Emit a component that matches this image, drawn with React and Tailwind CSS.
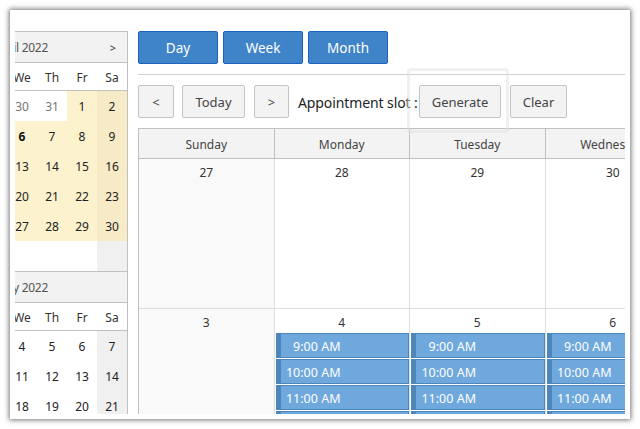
const aprilRows = [
  [['30', 'off'], ['31', 'off'], ['1', 'hi'], ['2', 'hiSat']],
  [['6', 'today'], ['7', 'hi'], ['8', 'hi'], ['9', 'hiSat']],
  [['13', 'hi'], ['14', 'hi'], ['15', 'hi'], ['16', 'hiSat']],
  [['20', 'hi'], ['21', 'hi'], ['22', 'hi'], ['23', 'hiSat']],
  [['27', 'hi'], ['28', 'hi'], ['29', 'hi'], ['30', 'hiSat']],
  [['', ''], ['', ''], ['', ''], ['', 'sat']],
];

const mayRows = [
  [['4', ''], ['5', ''], ['6', ''], ['7', 'sat']],
  [['11', ''], ['12', ''], ['13', ''], ['14', 'sat']],
  [['18', ''], ['19', ''], ['20', ''], ['21', 'sat']],
];

const cellStyles = {
  '': 'bg-white text-[#222]',
  off: 'bg-white text-[#777]',
  hi: 'bg-[#fdf2ce] text-[#222]',
  hiSat: 'bg-[#f6ebc6] text-[#222]',
  today: 'bg-[#fdf2ce] text-[#111] font-bold',
  sat: 'bg-[#f0f0f0] text-[#222]',
};

const MonthNav = ({ title, rows, next }) => (
  <div className="w-[120px]">
    <div className="h-[31px] pt-[2px] bg-[#f2f2f2] border-b border-[#c0c0c0] flex items-center justify-between text-[#555] pr-[11px]">
      <div className="w-[41px] flex justify-end whitespace-nowrap tracking-[-0.3px]">{title}</div>
      {next && <span className="text-[#333] text-[11px]">&gt;</span>}
    </div>
    <div className="h-[28px] pt-[2px] grid grid-cols-4 border-b border-[#c0c0c0] bg-white text-[#333]">
      {['We', 'Th', 'Fr', 'Sa'].map((d) => (
        <div key={d} className="flex items-center justify-center">{d}</div>
      ))}
    </div>
    {rows.map((row, i) => (
      <div key={i} className="grid grid-cols-4">
        {row.map(([n, kind], j) => (
          <div key={j} className={`h-[30px] pt-[2px] flex items-center justify-center ${cellStyles[kind]}`}>{n}</div>
        ))}
      </div>
    ))}
  </div>
);

const ViewButton = ({ children }) => (
  <button className="w-[80px] h-[33px] pt-[2px] bg-[#3f84c8] border border-[#1e62c0] rounded-[2px] text-white text-[13.5px]">{children}</button>
);

const ToolButton = ({ className, children }) => (
  <button className={`h-[33px] pt-[2px] bg-[#f3f3f3] border border-[#c4c4c4] rounded-[2px] text-[#444] text-[13px] ${className}`}>{children}</button>
);

const Slot = ({ time }) => (
  <div className="h-[25px] mb-px pt-[4px] bg-[#6fa8dc] border border-[#4d86bb] border-l-[5px] flex items-center text-white text-[12.5px]">
    <div className="w-[60px] text-right whitespace-nowrap">{time}</div>
  </div>
);

const DayCell = ({ n, slots, sunday }) => (
  <div className={`h-[120px] border-r border-[#ddd] ${sunday ? 'bg-[#f9f9f9]' : 'bg-white'}`}>
    <div className="h-[24px] pt-[4px] flex items-center justify-center text-[#333] text-[12px]">{n}</div>
    {slots && (
      <div className="pl-px">
        {['9:00 AM', '10:00 AM', '11:00 AM', '12:00 PM'].map((t) => <Slot key={t} time={t} />)}
      </div>
    )}
  </div>
);

const App = () => {
  const days = ['Sunday', 'Monday', 'Tuesday', 'Wednesday'];
  return (
    <div className="w-[640px] h-[429px] overflow-hidden bg-white p-[10px] font-['Noto_Sans',sans-serif]">
      <div className="relative w-[620px] h-[409px] bg-white shadow-[0_0_5px_1px_rgba(0,0,0,0.55)] p-[5px]">
        <div className="w-[610px] h-[399px] overflow-hidden flex">
          <div className="w-[113px] shrink-0 mt-[16px] border-t border-r border-[#c0c0c0] self-start flex justify-end text-[12px]">
            <div className="w-[120px] shrink-0">
              <MonthNav title="April 2022" rows={aprilRows} next />
              <div className="border-t border-[#c0c0c0]">
                <MonthNav title="May 2022" rows={mayRows} />
              </div>
            </div>
          </div>
          <div className="flex-1 min-w-0 ml-[10px] pt-[16px]">
            <div className="flex gap-[5px]">
              <ViewButton>Day</ViewButton>
              <ViewButton>Week</ViewButton>
              <ViewButton>Month</ViewButton>
            </div>
            <div className="mt-[10px] border-t border-[#cfcfcf]" />
            <div className="mt-[10px] flex items-center">
              <ToolButton className="w-[36px]">&lt;</ToolButton>
              <ToolButton className="w-[63px] ml-[8px]">Today</ToolButton>
              <ToolButton className="w-[35px] ml-[9px]">&gt;</ToolButton>
              <span className="ml-[9px] w-[121px] pt-[2px] whitespace-nowrap text-[14px] tracking-[-0.1px] text-[#222]">Appointment slot :</span>
              <ToolButton className="w-[82px]">Generate</ToolButton>
              <ToolButton className="w-[57px] ml-[9px]">Clear</ToolButton>
            </div>
            <div className="mt-[10px] w-[543px] border-t border-l border-[#c0c0c0] grid grid-cols-[135.5px_135.5px_135.5px_135.5px]">
              {days.map((d) => (
                <div key={d} className="h-[30px] pt-[2px] bg-[#f3f3f3] border-r border-b border-[#c0c0c0] flex items-center justify-center text-[#444] text-[12px]">{d}</div>
              ))}
              {['27', '28', '29', '30'].map((n, i) => (
                <div key={n} className={`h-[150px] border-r border-b border-[#ddd] ${i === 0 ? 'bg-[#f9f9f9]' : 'bg-white'}`}>
                  <div className="h-[27px] flex items-center justify-center text-[#333] text-[12px]">{n}</div>
                </div>
              ))}
              <DayCell n="3" sunday />
              <DayCell n="4" slots />
              <DayCell n="5" slots />
              <DayCell n="6" slots />
            </div>
          </div>
        </div>
        <div className="absolute left-[397px] top-[58px] w-[102px] h-[65px] border-[3px] border-[rgba(225,225,225,0.5)] rounded-[4px]" />
      </div>
    </div>
  );
};

export default App;
